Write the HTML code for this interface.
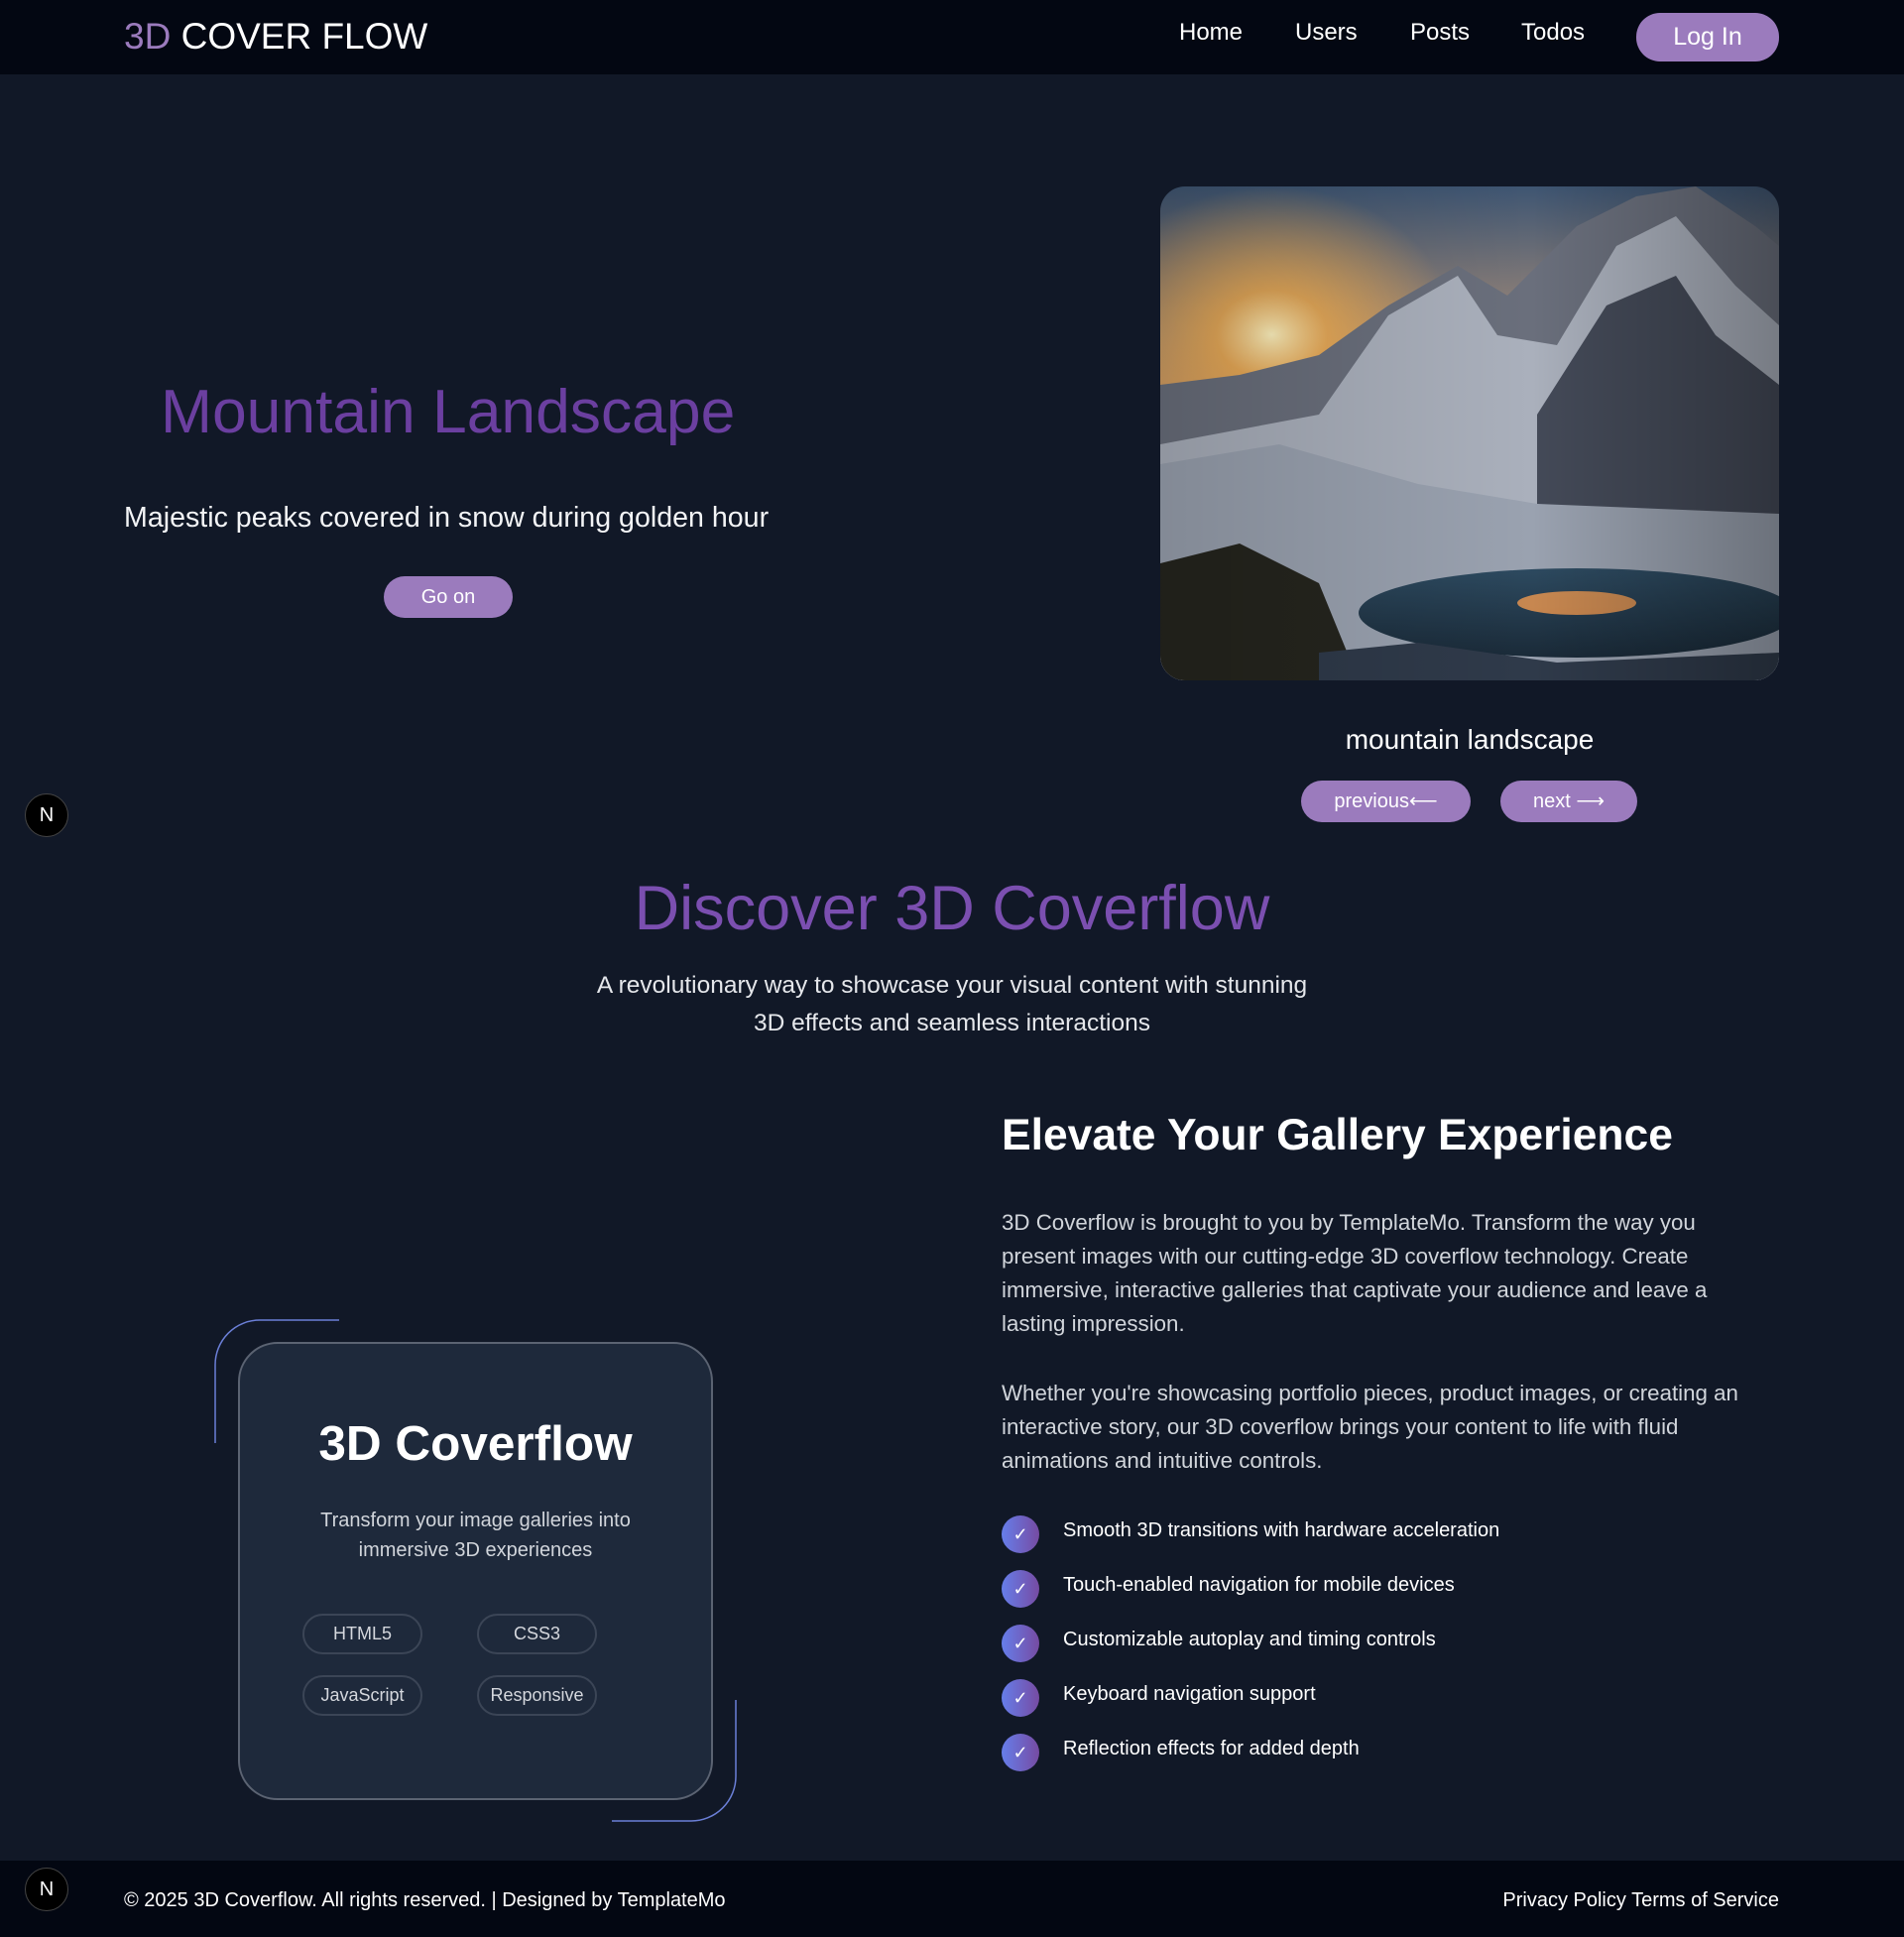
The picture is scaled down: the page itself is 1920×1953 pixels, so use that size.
<!DOCTYPE html>
<html><head><meta charset="utf-8"><style>
*{margin:0;padding:0;box-sizing:border-box}
body{width:1920px;height:1953px;background:#111827;font-family:"Liberation Sans",sans-serif;color:#fff;position:relative;overflow:hidden}
.abs{position:absolute}
nav{position:absolute;left:0;top:0;width:1920px;height:75px;background:#030712}
.logo{left:125px;top:16px;font-size:37px;white-space:nowrap}
.nl{top:19px;font-size:24px}
.btn{background:#9b7bbd;color:#fff;border-radius:24px;text-align:center}
.circ{width:44px;height:44px;border-radius:50%;background:#000;border:1px solid #444;color:#fff;font-size:20px;text-align:center;line-height:42px}
.tag{position:absolute;width:121px;height:41px;border:2px solid #3b4556;border-radius:21px;text-align:center;line-height:37px;font-size:18px;color:#d4d7dd}
.li{position:absolute;left:1010px;font-size:20px;color:#fff}
.li i{position:absolute;left:0;top:-6px;width:38px;height:38px;border-radius:50%;background:linear-gradient(90deg,#667eea,#764ba2);font-style:normal;text-align:center;line-height:38px;font-size:18px}
.li span{position:absolute;left:62px;top:-2px;white-space:nowrap}
.p{position:absolute;left:1010px;width:770px;font-size:22.3px;line-height:34px;color:#d1d5db}
</style></head><body>
<nav>
<div class="abs logo"><span style="color:#9b7bbd">3D</span> COVER FLOW</div>
<div class="abs nl" style="left:1189px">Home</div>
<div class="abs nl" style="left:1306px">Users</div>
<div class="abs nl" style="left:1422px">Posts</div>
<div class="abs nl" style="left:1534px">Todos</div>
<div class="abs btn" style="left:1650px;top:13px;width:144px;height:49px;line-height:49px;font-size:25px">Log In</div>
</nav>

<div class="abs" style="left:162px;top:380px;font-size:62.4px;color:#6b3fa0;white-space:nowrap">Mountain Landscape</div>
<div class="abs" style="left:125px;top:506px;font-size:28.6px;color:#f3f4f6;white-space:nowrap">Majestic peaks covered in snow during golden hour</div>
<div class="abs btn" style="left:387px;top:581px;width:130px;height:42px;line-height:43px;font-size:20px">Go on</div>

<svg class="abs" style="left:1170px;top:188px;border-radius:25px" width="624" height="498" viewBox="0 0 624 498">
<defs>
<linearGradient id="sky" x1="0" y1="0" x2="0" y2="1"><stop offset="0" stop-color="#3e5572"/><stop offset=".3" stop-color="#a08a7a"/><stop offset=".5" stop-color="#e0a060"/><stop offset=".7" stop-color="#6a5a5a"/></linearGradient>
<radialGradient id="sun" cx="0.18" cy="0.3" r="0.3"><stop offset="0" stop-color="#fff3c0"/><stop offset=".3" stop-color="#f6b050" stop-opacity=".8"/><stop offset="1" stop-color="#f6b050" stop-opacity="0"/></radialGradient>
<linearGradient id="lake" x1="0" y1="0" x2="0" y2="1"><stop offset="0" stop-color="#2d4a60"/><stop offset="1" stop-color="#1a2a38"/></linearGradient>
<linearGradient id="dark" x1="0" y1="0" x2="1" y2="0"><stop offset="0" stop-color="#000" stop-opacity=".15"/><stop offset=".6" stop-color="#000" stop-opacity="0"/><stop offset="1" stop-color="#000" stop-opacity=".3"/></linearGradient>
</defs>
<rect width="624" height="498" fill="url(#sky)"/>
<rect width="624" height="498" fill="url(#sun)"/>
<polygon points="0,200 80,190 160,170 230,120 300,80 350,110 420,40 480,10 540,0 600,40 624,60 624,498 0,498" fill="#6a6f7c"/>
<polygon points="160,230 230,130 300,90 340,150 400,160 460,60 520,30 580,100 624,140 624,498 0,498 0,260" fill="#aab0bc"/>
<polygon points="380,230 450,120 520,90 560,150 624,200 624,420 380,420" fill="#444a58"/>
<polygon points="0,280 120,260 260,300 380,320 624,330 624,498 0,498" fill="#9aa2b0"/>
<ellipse cx="420" cy="430" rx="220" ry="45" fill="url(#lake)"/>
<ellipse cx="420" cy="420" rx="60" ry="12" fill="#f09a50" opacity=".8"/>
<polygon points="0,380 80,360 160,400 200,498 0,498" fill="#25251e"/>
<polygon points="160,470 260,460 400,480 624,470 624,498 160,498" fill="#2f3a4a"/>
<rect width="624" height="498" fill="url(#dark)"/>
</svg>
<div class="abs" style="left:1482px;top:730px;transform:translateX(-50%);font-size:28px;white-space:nowrap">mountain landscape</div>
<div class="abs btn" style="left:1312px;top:787px;width:171px;height:42px;line-height:43px;font-size:20px">previous⟵</div>
<div class="abs btn" style="left:1513px;top:787px;width:138px;height:42px;line-height:43px;font-size:20px">next ⟶</div>

<div class="abs circ" style="left:25px;top:800px">N</div>

<div class="abs" style="left:0;width:1920px;top:880px;text-align:center;font-size:63px;color:#7b4fb0">Discover 3D Coverflow</div>
<div class="abs" style="left:0;width:1920px;top:975px;text-align:center;font-size:24.5px;line-height:38px;color:#e5e7eb">A revolutionary way to showcase your visual content with stunning<br>3D effects and seamless interactions</div>

<svg class="abs" style="left:0;top:0" width="1920" height="1953">
<path d="M342 1331 H262 A45 45 0 0 0 217 1376 V1455" fill="none" stroke="#6b7fd7" stroke-width="1.5"/>
<path d="M742 1714 V1791 A45 45 0 0 1 697 1836 H617" fill="none" stroke="#6b7fd7" stroke-width="1.5"/>
</svg>
<div class="abs" style="left:240px;top:1353px;width:479px;height:462px;background:#1e293b;border:2px solid #5b6372;border-radius:40px"></div>
<div class="abs" style="left:240px;width:479px;top:1427px;text-align:center;font-size:49.5px;font-weight:bold">3D Coverflow</div>
<div class="abs" style="left:240px;width:479px;top:1518px;text-align:center;font-size:20px;line-height:30px;color:#d1d5db">Transform your image galleries into<br>immersive 3D experiences</div>
<div class="tag" style="left:305px;top:1627px">HTML5</div>
<div class="tag" style="left:481px;top:1627px">CSS3</div>
<div class="tag" style="left:305px;top:1689px">JavaScript</div>
<div class="tag" style="left:481px;top:1689px">Responsive</div>

<div class="abs" style="left:1010px;top:1120px;font-size:44.4px;font-weight:bold;white-space:nowrap">Elevate Your Gallery Experience</div>
<div class="p" style="top:1216px">3D Coverflow is brought to you by TemplateMo. Transform the way you present images with our cutting-edge 3D coverflow technology. Create immersive, interactive galleries that captivate your audience and leave a lasting impression.</div>
<div class="p" style="top:1388px">Whether you're showcasing portfolio pieces, product images, or creating an interactive story, our 3D coverflow brings your content to life with fluid animations and intuitive controls.</div>
<div class="li" style="top:1534px"><i>✓</i><span>Smooth 3D transitions with hardware acceleration</span></div>
<div class="li" style="top:1589px"><i>✓</i><span>Touch-enabled navigation for mobile devices</span></div>
<div class="li" style="top:1644px"><i>✓</i><span>Customizable autoplay and timing controls</span></div>
<div class="li" style="top:1699px"><i>✓</i><span>Keyboard navigation support</span></div>
<div class="li" style="top:1754px"><i>✓</i><span>Reflection effects for added depth</span></div>

<div class="abs" style="left:0;top:1876px;width:1920px;height:77px;background:#030712"></div>
<div class="abs" style="left:125px;top:1905px;font-size:20px;white-space:nowrap">© 2025 3D Coverflow. All rights reserved. | Designed by TemplateMo</div>
<div class="abs" style="right:126px;top:1905px;font-size:20px;white-space:nowrap">Privacy Policy Terms of Service</div>
<div class="abs circ" style="left:25px;top:1883px">N</div>
</body></html>
